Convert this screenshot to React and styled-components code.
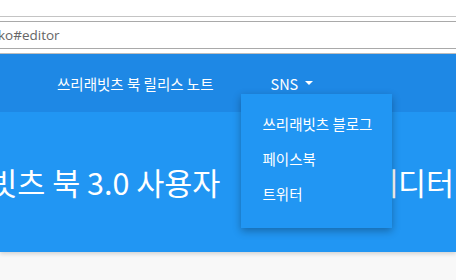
import React from 'react'
import styled, { createGlobalStyle } from 'styled-components'

const GlobalStyle = createGlobalStyle`
  * { box-sizing: border-box; }
  html, body { margin: 0; padding: 0; background: #f8f8f8; }
  body {
    width: 456px;
    height: 280px;
    overflow: hidden;
    font-family: "Noto Sans CJK KR", "Noto Sans", sans-serif;
  }
`

const SnsLinks = [
  { title: '쓰리래빗츠 블로그' },
  { title: '페이스북' },
  { title: '트위터' },
]

const App = () => {
  return (
    <Page>
      <GlobalStyle />
      <Chrome>
        <Toolbar>
          <AddressBar>
            <Url>ko#editor</Url>
          </AddressBar>
        </Toolbar>
      </Chrome>
      <Navbar>
        <NavLink>쓰리래빗츠 북 릴리스 노트</NavLink>
        <NavItem>
          <NavLink>SNS</NavLink>
          <Caret />
          <Dropdown>
            {SnsLinks.map((item, index) => (
              <DropdownItem key={index}>{item.title}</DropdownItem>
            ))}
          </Dropdown>
        </NavItem>
      </Navbar>
      <Hero>
        <Title>{'쓰리래빗츠 북 3.0 사용자\u2003설명서 웹에디터'}</Title>
      </Hero>
    </Page>
  )
}

export default App

const Page = styled.div`
  width: 456px;
  height: 280px;
  display: flex;
  flex-direction: column;
  overflow: hidden;
  background: #f8f8f8;
`

const Chrome = styled.div`
  height: 54px;
  background: #fff;
  padding-top: 16px;
  flex-shrink: 0;
`

const Toolbar = styled.div`
  height: 38px;
  border-top: 1px solid #c4c4c4;
  border-bottom: 1px solid #bdbdbd;
  padding: 4px 0 4px;
  background: #fff;
`

const AddressBar = styled.div`
  height: 28px;
  border-top: 1px solid #a9a9a9;
  border-bottom: 1px solid #a9a9a9;
  display: flex;
  align-items: center;
`

const Url = styled.span`
  font-family: "Open Sans", "Noto Sans", sans-serif;
  font-size: 13.5px;
  color: #666;
  margin-left: -2px;
`

const Navbar = styled.nav`
  height: 58px;
  background: #1e88e5;
  display: flex;
  align-items: center;
  padding-left: 57px;
  gap: 57px;
  flex-shrink: 0;
  position: relative;
  z-index: 2;
`

const NavItem = styled.div`
  position: relative;
  display: flex;
  align-items: center;
`

const NavLink = styled.span`
  color: #fff;
  font-size: 14.5px;
  white-space: nowrap;
`

const Caret = styled.span`
  width: 0;
  height: 0;
  margin-left: 7px;
  border-left: 4px solid transparent;
  border-right: 4px solid transparent;
  border-top: 4px solid #fff;
`

const Dropdown = styled.ul`
  position: absolute;
  top: 21px;
  left: -29px;
  width: 151px;
  margin: 0;
  padding: 12px 0 17px;
  list-style: none;
  background: #2196f3;
  box-shadow: 0 3px 8px rgba(0, 0, 0, 0.3);
`

const DropdownItem = styled.li`
  height: 35px;
  line-height: 35px;
  padding-left: 21px;
  color: #fff;
  font-size: 14.5px;
  white-space: nowrap;
`

const Hero = styled.header`
  height: 140px;
  background: #2196f3;
  display: flex;
  align-items: center;
  flex-shrink: 0;
  box-shadow: 0 2px 4px rgba(0, 0, 0, 0.15);
  position: relative;
  z-index: 1;
`

const Title = styled.h1`
  margin: 0 0 0 -95px;
  color: #fff;
  font-size: 30.5px;
  font-weight: 400;
  white-space: nowrap;
`
